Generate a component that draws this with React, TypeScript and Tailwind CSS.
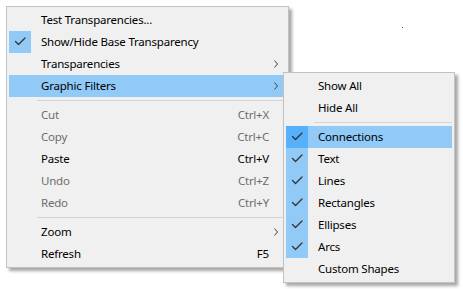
import React from "react";

type Item =
    | { kind: "sep" }
    | {
          kind?: "item";
          label: string;
          shortcut?: string;
          checked?: boolean;
          disabled?: boolean;
          submenu?: boolean;
          active?: boolean;
      };

const mainItems: Item[] = [
    { label: "Test Transparencies..." },
    { label: "Show/Hide Base Transparency", checked: true },
    { label: "Transparencies", submenu: true },
    { label: "Graphic Filters", submenu: true, active: true },
    { kind: "sep" },
    { label: "Cut", shortcut: "Ctrl+X", disabled: true },
    { label: "Copy", shortcut: "Ctrl+C", disabled: true },
    { label: "Paste", shortcut: "Ctrl+V" },
    { label: "Undo", shortcut: "Ctrl+Z", disabled: true },
    { label: "Redo", shortcut: "Ctrl+Y", disabled: true },
    { kind: "sep" },
    { label: "Zoom", submenu: true },
    { label: "Refresh", shortcut: "F5" },
];

const filterItems: Item[] = [
    { label: "Show All" },
    { label: "Hide All" },
    { kind: "sep" },
    { label: "Connections", checked: true, active: true },
    { label: "Text", checked: true },
    { label: "Lines", checked: true },
    { label: "Rectangles", checked: true },
    { label: "Ellipses", checked: true },
    { label: "Arcs", checked: true },
    { label: "Custom Shapes" },
];

function CheckMark() {
    return (
        <svg width="22" height="22" viewBox="0 0 22 22" fill="none">
            <path
                d="M6.5 10.5 L9.5 13.5 L16 7"
                stroke="#333333"
                strokeWidth="1.3"
                strokeLinecap="round"
                strokeLinejoin="round"
            />
        </svg>
    );
}

function Chevron() {
    return (
        <svg width="6" height="10" viewBox="0 0 6 10" fill="none">
            <path d="M1.5 1.5 L4.5 5 L1.5 8.5" stroke="#444444" strokeWidth="1" />
        </svg>
    );
}

function MenuRow({ item }: { item: Item }) {
    if (item.kind === "sep") {
        return (
            <div className="h-[7px] flex items-center pl-[28px]">
                <div className="h-px w-full bg-[#d4d4d4]" />
            </div>
        );
    }
    return (
        <div
            className={`h-[22px] flex items-center ${item.active ? "bg-[#91c9f7]" : ""} ${
                item.disabled ? "text-[#6d6d6d]" : "text-black"
            }`}
        >
            <div
                className={`w-[22px] h-[22px] shrink-0 ${
                    item.checked ? (item.active ? "bg-[#56b0fa]" : "bg-[#91c9f7]") : ""
                }`}
            >
                {item.checked && <CheckMark />}
            </div>
            <span className="ml-[10px] flex-1 whitespace-nowrap">{item.label}</span>
            {item.shortcut && <span className="whitespace-nowrap">{item.shortcut}</span>}
            <div className="w-[17px] h-[22px] shrink-0 flex items-center pl-[4px]">
                {item.submenu && <Chevron />}
            </div>
        </div>
    );
}

function Menu({ items, className }: { items: Item[]; className: string }) {
    return (
        <div
            className={`bg-[#f0f0f0] border border-[#c2c2c2] p-[2px] shadow-[3px_3px_3px_rgba(0,0,0,0.35)] ${className}`}
        >
            {items.map((it, i) => (
                <MenuRow key={i} item={it} />
            ))}
        </div>
    );
}

export default function App() {
    return (
        <div
            className="relative w-[463px] h-[289px] bg-white overflow-hidden text-[11.5px] tracking-[-0.2px]"
            style={{ fontFamily: '"Noto Sans", "Open Sans", sans-serif' }}
        >
            <Menu items={mainItems} className="ml-[6px] mt-[6px] w-[283px]" />
            <Menu items={filterItems} className="absolute left-[283px] top-[72px] w-[172px]" />
            <div className="absolute left-[402px] top-[27px] w-px h-px bg-[#555555]" />
        </div>
    );
}
